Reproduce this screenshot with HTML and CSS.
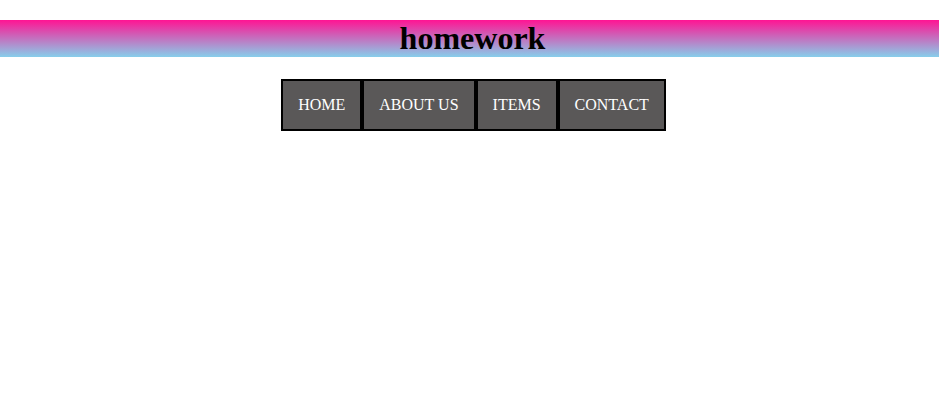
FILE: index.html
```html
<!DOCTYPE html>
<html>
<head>
<meta charset="utf-8">
<title>homework</title>
<link rel="stylesheet" href="styles.css">
</head>
<body>
<header class="banner">
  <h1 class="title">homework</h1>
</header>
<nav class="menu">
  <ul class="menu-list">
    <li class="menu-item">HOME</li>
    <li class="menu-item">ABOUT US</li>
    <li class="menu-item">ITEMS</li>
    <li class="menu-item">CONTACT</li>
  </ul>
</nav>
</body>
</html>
```
FILE: styles.css
```css
html, body {
  margin: 0;
  padding: 0;
  background: #fff;
  font-family: "Liberation Serif", "Times New Roman", serif;
}
.banner {
  margin-top: 20px;
  background: linear-gradient(#ff1493, #87ceeb);
}
.title {
  margin: 0;
  padding-left: 6px;
  font-size: 32px;
  line-height: 37px;
  font-weight: bold;
  text-align: center;
  color: #000;
}
.menu {
  margin-top: 22px;
  display: flex;
  justify-content: center;
  padding-left: 8px;
}
.menu-list {
  list-style: none;
  margin: 0;
  padding: 0;
  display: flex;
}
.menu-item {
  border: 2px solid #000;
  background: #5a5858;
  color: #fff;
  font-size: 16px;
  line-height: 18px;
  padding: 15px 15px;
}
```
